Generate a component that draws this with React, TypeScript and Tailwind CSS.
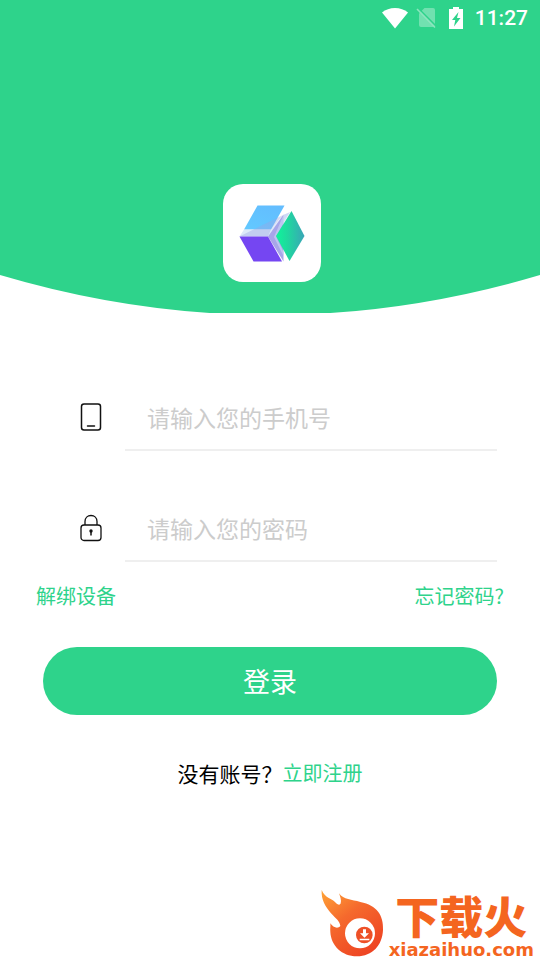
import { useState } from "react";
import type { FormEvent, ReactNode } from "react";

type FieldProps = {
  id: string;
  type: string;
  label: string;
  icon: ReactNode;
  value: string;
  onChange: (value: string) => void;
};

function StatusBar() {
  return (
    <div className="flex h-9 items-center justify-end pr-3 text-white">
      <svg width="26" height="21" viewBox="0 0 26 21" aria-hidden="true">
        <path d="M0 4.6C3.6 1.6 8 0 13 0s9.4 1.6 13 4.6L13 20.5Z" fill="currentColor" />
      </svg>
      <svg className="ml-2" width="21" height="22" viewBox="0 0 21 22" aria-hidden="true">
        <path d="M8.500 1H17q2 0 2 2v15q0 2-2 2H5q-2 0-2-2V6.500Z" fill="currentColor" opacity="0.32" />
        <path d="M2 1l18 18" stroke="#2ed38b" strokeWidth="1.600" />
        <path d="M1 2l18 18.500" stroke="#8ce5be" strokeWidth="1.600" />
      </svg>
      <svg className="ml-3" width="14" height="22" viewBox="0 0 14 22" aria-hidden="true">
        <path d="M4 0h6v2h4v20H0V2h4Z" fill="currentColor" />
        <path d="M9.500 5 3 13h3.300L5 19.500 11.500 11H8Z" fill="#2ed38b" />
      </svg>
      <span className="ml-3 font-['Roboto',sans-serif] text-[21px] font-medium leading-6">11:27</span>
    </div>
  );
}

function CubeLogo() {
  return (
    <svg width="98" height="98" viewBox="0 0 98 98" role="img" aria-label="Logo">
      <defs>
        <linearGradient id="cube-top" x1="0.8" y1="0" x2="0.2" y2="1">
          <stop offset="0" stopColor="#63bdff" />
          <stop offset="1" stopColor="#62c8ff" />
        </linearGradient>
        <linearGradient id="cube-right" x1="0" y1="0" x2="1" y2="0">
          <stop offset="0" stopColor="#0ef59b" />
          <stop offset="0.4" stopColor="#1fd99e" />
          <stop offset="1" stopColor="#3aa5b7" />
        </linearGradient>
      </defs>
      <path d="M34.500 21.500H61.500L48 45.500H21Z" fill="url(#cube-top)" />
      <path d="M21 45.500h27l13-15 6-2-22 24H16.500Z" fill="#d5e3f7" opacity="0.8" />
      <path d="M16.500 52.500 60 31 48 45.500 45 52.500Z" fill="#9aa6e4" opacity="0.4" />
      <path d="M60.500 30.500V77.500L45 52.500Z" fill="#a8a5e9" />
      <path d="M60.500 31 67 28 53 52.500 60.500 68V72L51 53Z" fill="#c7d1f3" opacity="0.7" />
      <path d="M16.500 52.500H45L59 77.500H30.500Z" fill="#7546f2" />
      <path d="M68.500 27 81.500 52 66.500 77 53 52Z" fill="url(#cube-right)" />
    </svg>
  );
}

function PhoneIcon() {
  return (
    <svg width="22" height="28" viewBox="0 0 22 28" fill="none" stroke="#111" strokeWidth="1.500" aria-hidden="true">
      <rect x="1.500" y="1" width="19" height="26" rx="2.500" />
      <path d="M7.500 23h7" strokeLinecap="round" />
    </svg>
  );
}

function LockIcon() {
  return (
    <svg width="22" height="28" viewBox="0 0 22 28" fill="none" stroke="#111" strokeWidth="1.300" aria-hidden="true">
      <rect x="1" y="11" width="20" height="15.500" rx="3" />
      <path d="M5 11V7.500C5 4 7.500 1.500 11 1.500S17 4 17 7.500V11" />
      <circle cx="11" cy="17" r="1.700" fill="#111" stroke="none" />
      <path d="M11 17v4.500" strokeWidth="1.500" />
    </svg>
  );
}

function Field({ id, type, label, icon, value, onChange }: FieldProps) {
  return (
    <div className="flex items-center">
      <label htmlFor={id} aria-label={label} className="w-[45px] shrink-0 pb-1">
        {icon}
      </label>
      <input
        id={id}
        type={type}
        placeholder={label}
        value={value}
        onChange={(event) => onChange(event.target.value)}
        className="h-[65px] min-w-0 flex-1 border-b-2 border-[#efefef] px-[22px] pb-0.5 text-[23px] text-gray-800 outline-none placeholder:text-[#cccccc]"
      />
    </div>
  );
}

function SiteMark() {
  return (
    <footer className="mt-auto flex items-end justify-end gap-1 pb-0.5 pr-1.5">
      <svg width="64" height="70" viewBox="0 0 192 210" aria-hidden="true">
        <defs>
          <linearGradient id="flame" x1="0" y1="0" x2="0.7" y2="1">
            <stop offset="0" stopColor="#ffa436" />
            <stop offset="0.45" stopColor="#f5692d" />
            <stop offset="1" stopColor="#ee4423" />
          </linearGradient>
        </defs>
        <path
          d="M2 6C12 30 32 32 42 42c8 8 14 12 17 4 3-8-1-18-5-30 14 20 38 18 64 26 50 10 70 40 68 84-2 46-32 79-78 79-46 0-78-33-80-73-1-10 1-18 0-26 8 12 22 18 30 8-2-16-14-22-28-38C14 56 0 36 2 6Z"
          fill="url(#flame)"
        />
        <circle cx="117" cy="136" r="45" fill="#fff" />
        <circle cx="130" cy="141" r="25" fill="#ee5027" />
        <path d="M126 124h9v12h9l-13.500 13-13.500-13h9ZM116 152h29v5h-29Z" fill="#fff" />
      </svg>
      <div className="flex flex-col items-center text-[#f4651f]">
        <span className="text-[44px] font-black leading-[54px]">下载火</span>
        <span className="font-['DejaVu_Sans',sans-serif] text-[18px] font-bold leading-4">xiazaihuo.com</span>
      </div>
    </footer>
  );
}

export default function App() {
  const [phone, setPhone] = useState("");
  const [password, setPassword] = useState("");

  function handleSubmit(event: FormEvent) {
    event.preventDefault();
  }

  return (
    <div className="flex min-h-screen flex-col bg-white font-['Noto_Sans_CJK_SC',sans-serif]">
      <header className="relative h-[313px] overflow-hidden">
        <svg className="absolute inset-0 h-full w-full" viewBox="0 0 540 313" preserveAspectRatio="none" aria-hidden="true">
          <path d="M0 0H540V275Q270 355 0 275Z" fill="#2ed38b" />
        </svg>
        <div className="relative">
          <StatusBar />
          <div className="mx-auto mt-[148px] h-[98px] w-[98px] translate-x-0.5 rounded-[20px] bg-white">
            <CubeLogo />
          </div>
        </div>
      </header>

      <form onSubmit={handleSubmit} className="mt-[73px]">
        <div className="flex flex-col gap-[46px] pl-20 pr-[43px]">
          <Field id="phone" type="tel" label="请输入您的手机号" icon={<PhoneIcon />} value={phone} onChange={setPhone} />
          <Field id="password" type="password" label="请输入您的密码" icon={<LockIcon />} value={password} onChange={setPassword} />
        </div>

        <div className="mt-5 flex justify-between px-9 text-xl leading-7 text-[#2ed38b]">
          <a href="#unbind">解绑设备</a>
          <a href="#forgot">忘记密码?</a>
        </div>

        <div className="mt-[37px] px-[43px]">
          <button type="submit" className="h-[68px] w-full rounded-full bg-[#2ed38b] text-[27px] text-white">
            登录
          </button>
        </div>
      </form>

      <p className="mt-[43px] flex items-center justify-center text-[21px] leading-[30px] text-black">
        没有账号？
        <a href="#register" className="text-xl text-[#2ed38b]">
          立即注册
        </a>
      </p>

      <SiteMark />
    </div>
  );
}
